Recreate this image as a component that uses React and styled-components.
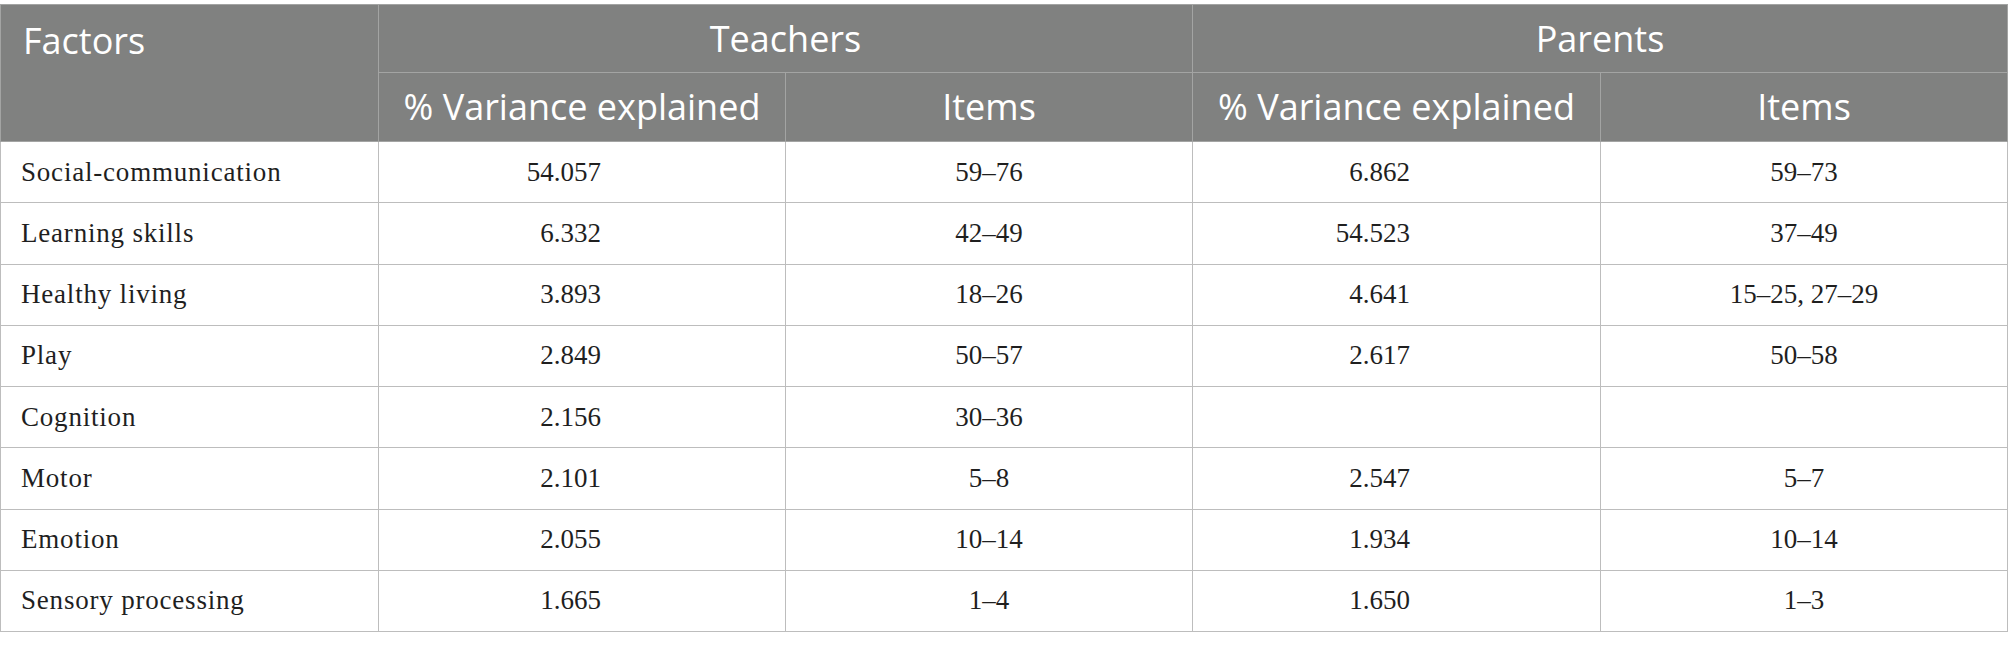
import React from 'react'
import styled, { createGlobalStyle } from 'styled-components'

const Global = createGlobalStyle`
  html, body {
    margin: 0;
    padding: 0;
    background: #ffffff;
  }
  body {
    padding-top: 4px;
  }
`

const Table = styled.table`
  width: 2007px;
  table-layout: fixed;
  border-collapse: collapse;
  border: 1px solid #b9b9b9;
`

const HeadRow = styled.tr`
  height: ${p => p.h}px;
  background: #808180;
`

const HeadCell = styled.th`
  color: #ffffff;
  font-family: "Open Sans", "Liberation Sans", sans-serif;
  font-weight: 400;
  font-size: 36px;
  line-height: 1;
  padding: 0 22px;
  border: 1px solid #a3a4a3;
  text-align: ${p => (p.left ? 'left' : 'center')};
  vertical-align: ${p => (p.top ? 'top' : 'middle')};
  padding-top: ${p => (p.top ? '18px' : '0')};
  white-space: nowrap;
`

const BodyRow = styled.tr`
  height: 61.25px;
`

const Cell = styled.td`
  font-family: "Liberation Serif", "Times New Roman", serif;
  font-size: 27px;
  line-height: 1;
  color: #1f1f1f;
  border: 1px solid #bdbdbd;
  padding: 0 20px;
  vertical-align: middle;
  white-space: nowrap;
`

const FactorCell = styled(Cell)`
  text-align: left;
  padding-left: 20px;
  letter-spacing: 0.8px;
`

const NumCell = styled(Cell)`
  text-align: right;
  padding-right: ${p => p.pad}px;
`

const ItemCell = styled(Cell)`
  text-align: center;
`

const rows = [
  ['Social-communication', '54.057', '59–76', '6.862', '59–73'],
  ['Learning skills', '6.332', '42–49', '54.523', '37–49'],
  ['Healthy living', '3.893', '18–26', '4.641', '15–25, 27–29'],
  ['Play', '2.849', '50–57', '2.617', '50–58'],
  ['Cognition', '2.156', '30–36', '', ''],
  ['Motor', '2.101', '5–8', '2.547', '5–7'],
  ['Emotion', '2.055', '10–14', '1.934', '10–14'],
  ['Sensory processing', '1.665', '1–4', '1.650', '1–3'],
]

const App = () => {
  return (
    <>
      <Global />
      <Table>
        <colgroup>
          <col style={{ width: 378 }} />
          <col style={{ width: 407 }} />
          <col style={{ width: 407 }} />
          <col style={{ width: 408 }} />
          <col style={{ width: 407 }} />
        </colgroup>
        <thead>
          <HeadRow h={68}>
            <HeadCell rowSpan={2} left top>Factors</HeadCell>
            <HeadCell colSpan={2}>Teachers</HeadCell>
            <HeadCell colSpan={2}>Parents</HeadCell>
          </HeadRow>
          <HeadRow h={69}>
            <HeadCell>% Variance explained</HeadCell>
            <HeadCell>Items</HeadCell>
            <HeadCell>% Variance explained</HeadCell>
            <HeadCell>Items</HeadCell>
          </HeadRow>
        </thead>
        <tbody>
          {rows.map(r => (
            <BodyRow key={r[0]}>
              <FactorCell>{r[0]}</FactorCell>
              <NumCell pad={184}>{r[1]}</NumCell>
              <ItemCell>{r[2]}</ItemCell>
              <NumCell pad={190}>{r[3]}</NumCell>
              <ItemCell>{r[4]}</ItemCell>
            </BodyRow>
          ))}
        </tbody>
      </Table>
    </>
  )
}

export default App
